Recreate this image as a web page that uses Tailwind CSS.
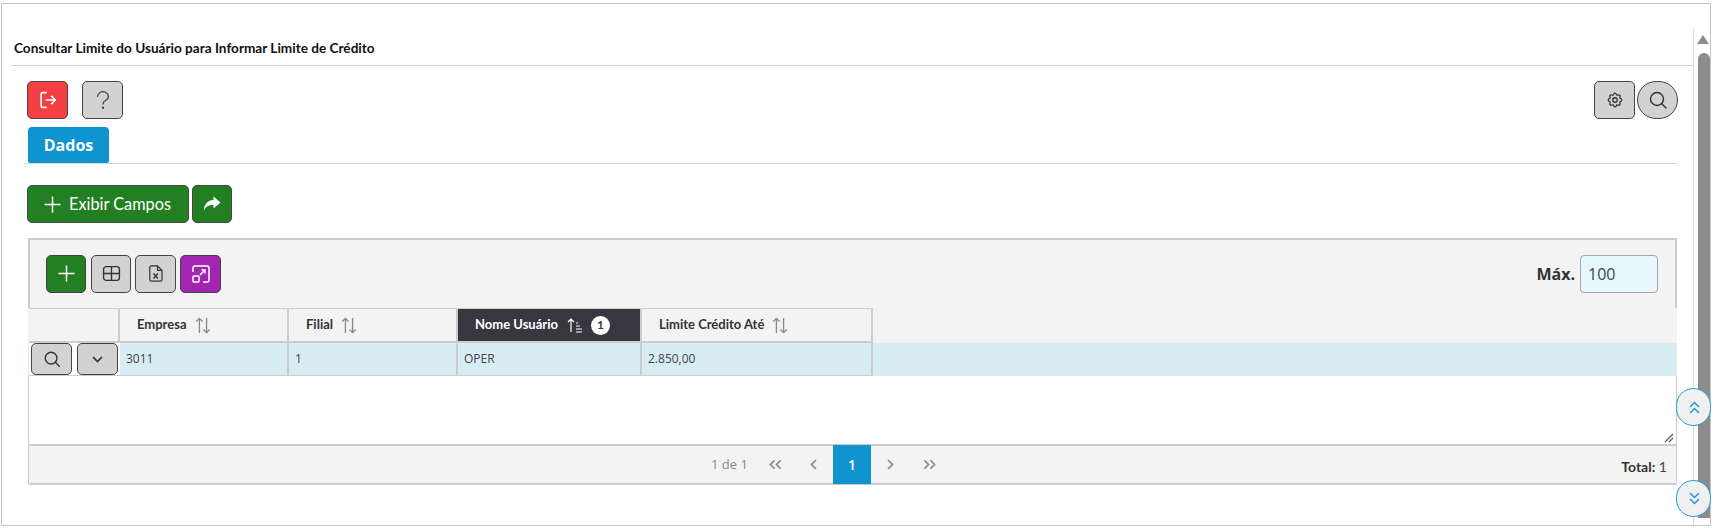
<!DOCTYPE html>
<html lang="pt-BR">
<head>
    <meta charset="UTF-8">
    <title>Consultar Limite do Usuário</title>
    <script src="https://cdn.jsdelivr.net/npm/@tailwindcss/browser@4"></script>
</head>
<body class="bg-white font-['Open_Sans',sans-serif] text-[#333]">
<div class="relative w-[1713px] h-[528px] overflow-hidden">
    <!-- moldura -->
    <div class="absolute left-[1px] top-[3px] w-[1710px] h-[523px] border border-[#c4c4c4]"></div>

    <div class="relative pt-[37px] pl-[11px] w-[1693px]">
        <h1 class="h-[29px] pl-[3px] text-[13.600px] leading-[22px] font-bold text-[#111] font-['Lato',sans-serif] border-b border-[#d0d0d0]">Consultar Limite do Usuário para Informar Limite de Crédito</h1>

        <div class="pl-[16px] pr-[15px] w-[1682px]">
            <!-- barra superior -->
            <div class="flex items-center mt-[15px] h-[38px]">
                <button class="w-[41px] h-[38px] rounded-[5px] border border-[#444] bg-[#f44043] flex items-center justify-center text-white">
                    <svg width="22" height="22" viewBox="0 0 24 24" fill="none" stroke="currentColor" stroke-width="1.800" stroke-linecap="round" stroke-linejoin="round"><path d="M10 4H6a1.500 1.500 0 0 0-1.500 1.500v13A1.500 1.500 0 0 0 6 20h4"/><path d="M10 12h10"/><path d="M16 8l4 4-4 4"/></svg>
                </button>
                <button class="ml-[14px] w-[41px] h-[38px] rounded-[5px] border border-[#444] bg-[#d2d2d2] flex items-center justify-center text-[#444]">
                    <svg width="20" height="22" viewBox="0 0 22 24" fill="none" stroke="currentColor" stroke-width="1.400" stroke-linecap="round"><path d="M5 8a6 5 0 1 1 9.500 4c-2.500 1.500-3.500 2.300-3.500 4.500"/><circle cx="11" cy="20.500" r="0.600" fill="currentColor"/></svg>
                </button>
                <div class="ml-auto flex items-center">
                    <button class="w-[41px] h-[38px] rounded-[5px] border border-[#444] bg-[#d2d2d2] flex items-center justify-center text-[#333]">
                        <svg width="18" height="18" viewBox="0 0 24 24" fill="none" stroke="currentColor" stroke-width="1.700" stroke-linecap="round" stroke-linejoin="round"><path d="M10.300 4.300c.4-1.800 3-1.800 3.400 0a1.700 1.700 0 0 0 2.600 1.100c1.500-.9 3.300.8 2.400 2.400a1.700 1.700 0 0 0 1 2.500c1.800.4 1.800 3 0 3.400a1.700 1.700 0 0 0-1 2.600c.9 1.500-.9 3.300-2.400 2.400a1.700 1.700 0 0 0-2.600 1c-.4 1.800-3 1.800-3.400 0a1.700 1.700 0 0 0-2.600-1c-1.500.9-3.300-.9-2.400-2.400a1.700 1.700 0 0 0-1-2.600c-1.800-.4-1.800-3 0-3.400a1.700 1.700 0 0 0 1-2.500c-.9-1.600.9-3.300 2.400-2.400a1.700 1.700 0 0 0 2.600-1.100z"/><circle cx="12" cy="12" r="3"/></svg>
                    </button>
                    <button class="ml-[2px] w-[41px] h-[38px] rounded-full border border-[#444] bg-[#d2d2d2] flex items-center justify-center text-[#333]">
                        <svg width="20" height="20" viewBox="0 0 20 20" fill="none" stroke="currentColor" stroke-width="1.400" stroke-linecap="round"><circle cx="9" cy="9" r="6.500"/><path d="M14 14l4 4"/></svg>
                    </button>
                </div>
            </div>

            <!-- abas -->
            <div class="mt-[8px] h-[37px] border-b border-[#d4d4d4] w-[1653px] -ml-[3px] pl-[4px]">
                <div class="w-[81px] h-[36px] rounded-t-[4px] rounded-b-[2px] bg-[#1094cf] text-white text-[16px] font-bold flex items-center justify-center">Dados</div>
            </div>

            <!-- acoes -->
            <div class="flex mt-[21px] gap-[3px]">
                <button class="w-[162px] h-[38px] rounded-[5px] border border-[#444] bg-[#228022] text-white flex items-center pl-[16px] gap-[8px] text-[16.300px] font-['Lato',sans-serif]">
                    <svg width="17" height="17" viewBox="0 0 17 17" stroke="currentColor" stroke-width="1.500"><path d="M8.500 0.500v16M0.500 8.500h16"/></svg>
                    Exibir Campos
                </button>
                <button class="w-[40px] h-[38px] rounded-[5px] border border-[#444] bg-[#228022] text-white flex items-center justify-center">
                    <svg width="18" height="16" viewBox="0 0 18 16" fill="currentColor"><path d="M10.500 0.500l7 6-7 6V9C6 9 3 10 1 14.500 1 8.500 4 4.500 10.500 4z"/></svg>
                </button>
            </div>

            <!-- tabela -->
            <div class="relative mt-[15px] ml-[1px] w-[1649px] h-[209px] border-x border-[#cccccc]">
                <div class="h-[70px] bg-[#f3f3f3] border-t-2 border-r-2 border-l-2 border-[#cccccc] flex items-center pl-[16px] pr-[17px] pb-[1px] -ml-[1px] w-[1649px]">
                    <button class="w-[40px] h-[38px] rounded-[5px] border border-[#444] bg-[#228022] text-white flex items-center justify-center">
                        <svg width="17" height="17" viewBox="0 0 17 17" stroke="currentColor" stroke-width="1.500"><path d="M8.500 0.500v16M0.500 8.500h16"/></svg>
                    </button>
                    <button class="ml-[5px] w-[40px] h-[38px] rounded-[5px] border border-[#444] bg-[#d2d2d2] flex items-center justify-center text-[#333]">
                        <svg width="19" height="17" viewBox="0 0 18 16" fill="none" stroke="currentColor" stroke-width="1.300"><rect x="1.500" y="1.500" width="15" height="13" rx="2.500"/><path d="M9 1.500v13M1.500 8h15"/></svg>
                    </button>
                    <button class="ml-[4px] w-[41px] h-[38px] rounded-[5px] border border-[#444] bg-[#d2d2d2] flex items-center justify-center text-[#333]">
                        <svg width="14" height="17" viewBox="0 0 14 17" fill="none" stroke="currentColor" stroke-width="1.200" stroke-linejoin="round"><path d="M2.500 0.800h6l4.500 4.500v9.200a1.700 1.700 0 0 1-1.700 1.700H2.500A1.700 1.700 0 0 1 0.800 14.500V2.500A1.700 1.700 0 0 1 2.500 0.800z"/><path d="M8.500 0.800v4.500H13"/><path d="M4.500 8.500l4.500 5M9 8.500l-4.500 5" stroke-width="1.400"/></svg>
                    </button>
                    <button class="ml-[4px] w-[41px] h-[38px] rounded-[5px] border border-[#444] bg-[#a025b0] flex items-center justify-center text-white">
                        <svg width="18" height="18" viewBox="0 0 18 18" fill="none" stroke="currentColor" stroke-width="1.500" stroke-linejoin="round"><path d="M1 7V3a2 2 0 0 1 2-2h12a2 2 0 0 1 2 2v12a2 2 0 0 1-2 2h-4"/><rect x="1" y="11" width="6" height="6" rx="1"/><path d="M8 10l5-5M9.500 5H13v3.500"/></svg>
                    </button>
                    <div class="ml-auto flex items-center">
                        <span class="text-[16px] font-bold text-[#333] mr-[5px]">Máx.</span>
                        <input value="100" class="w-[78px] h-[38px] rounded-[4px] border border-[#a6a6a6] bg-[#e5f6fd] pl-[7px] text-[16px] text-[#444] outline-none">
                    </div>
                </div>

                <!-- cabecalho -->
                <div class="flex h-[35px] bg-[#f3f3f3] -ml-[1px] w-[1649px] pl-[1px] text-[13px] font-bold text-[#333] font-['Lato',sans-serif]">
                    <div class="w-[91px] border-t border-r-2 border-b-2 border-[#cccccc]"></div>
                    <div class="w-[169px] flex items-center pl-[17px] gap-[8px] border-t border-r-2 border-b-2 border-[#cccccc]">Empresa
                        <svg width="16" height="17" viewBox="0 0 17 19" fill="none" stroke="#8a8a8a" stroke-width="1.500"><path d="M4.500 18V1.500M1 5l3.500-3.500L8 5M12.500 1v16.500M9 14l3.500 3.500L16 14"/></svg>
                    </div>
                    <div class="w-[169px] flex items-center pl-[17px] gap-[8px] border-t border-r-2 border-b-2 border-[#cccccc]">Filial
                        <svg width="16" height="17" viewBox="0 0 17 19" fill="none" stroke="#8a8a8a" stroke-width="1.500"><path d="M4.500 18V1.500M1 5l3.500-3.500L8 5M12.500 1v16.500M9 14l3.500 3.500L16 14"/></svg>
                    </div>
                    <div class="w-[184px] flex items-center pl-[17px] bg-[#37373d] text-white border-t border-r-2 border-b-2 border-[#cccccc]">Nome Usuário
                        <svg class="ml-[9px]" width="16" height="15" viewBox="0 0 16 15" fill="none" stroke="#ffffff" stroke-width="1.200"><path d="M4 14V1M1 4l3-3 3 3M9 5h2M9 8h4M9 11h6M9 14h6"/></svg>
                        <span class="ml-[8px] w-[19px] h-[19px] rounded-full bg-white text-[#37373d] text-[12px] flex items-center justify-center">1</span>
                    </div>
                    <div class="w-[231px] flex items-center pl-[17px] gap-[8px] border-t border-r-2 border-b-2 border-[#cccccc]">Limite Crédito Até
                        <svg width="16" height="17" viewBox="0 0 17 19" fill="none" stroke="#8a8a8a" stroke-width="1.500"><path d="M4.500 18V1.500M1 5l3.500-3.500L8 5M12.500 1v16.500M9 14l3.500 3.500L16 14"/></svg>
                    </div>
                </div>

                <!-- linha -->
                <div class="flex h-[33px] bg-[#d8edf3] -ml-[1px] w-[1649px] pl-[1px] text-[12px] text-[#444]">
                    <div class="w-[91px] flex items-center gap-[5px] pl-[2px] bg-white border-b border-[#cccccc]">
                        <button class="w-[41px] h-[32px] rounded-[5px] border border-[#444] bg-[#d2d2d2] flex items-center justify-center text-[#333]">
                            <svg width="18" height="18" viewBox="0 0 20 20" fill="none" stroke="currentColor" stroke-width="1.500" stroke-linecap="round"><circle cx="9" cy="9" r="6.500"/><path d="M14 14l4 4"/></svg>
                        </button>
                        <button class="w-[41px] h-[32px] rounded-[5px] border border-[#444] bg-[#d2d2d2] flex items-center justify-center text-[#333]">
                            <svg width="11" height="7" viewBox="0 0 11 7" fill="none" stroke="currentColor" stroke-width="1.700"><path d="M1 1l4.500 4.500L10 1"/></svg>
                        </button>
                    </div>
                    <div class="w-[169px] flex items-center pl-[6px] border-r-2 border-b border-[#cccccc]">3011</div>
                    <div class="w-[169px] flex items-center pl-[6px] border-r-2 border-b border-[#cccccc]">1</div>
                    <div class="w-[184px] flex items-center pl-[6px] border-r-2 border-b border-[#cccccc]">OPER</div>
                    <div class="w-[231px] flex items-center pl-[6px] border-r-2 border-b border-[#cccccc]">2.850,00</div>
                </div>

                <!-- alca de redimensionar -->
                <svg class="absolute right-[2px] bottom-[4px]" width="10" height="10" viewBox="0 0 10 10" stroke="#555" stroke-width="1.100"><path d="M1 9l8-8M5 9l4-4"/></svg>
            </div>

            <!-- paginacao -->
            <div class="relative ml-[1px] -mt-[3px] w-[1649px] h-[41px] rounded-[2px] bg-[#f3f3f3] border-x border-t-2 border-b-2 border-[#cccccc] text-[13px] text-[#888]">
                <div class="absolute left-[682px] top-[-1px] flex items-center h-[39px]">
                    <span class="w-[36px] text-center whitespace-nowrap">1 de 1</span>
                    <svg class="ml-[22px]" width="13" height="11" viewBox="0 0 14 11" fill="none" stroke="#888" stroke-width="1.700"><path d="M6 1L1.500 5.500 6 10M12.500 1L8 5.500l4.500 4.500"/></svg>
                    <svg class="ml-[28px]" width="7" height="11" viewBox="0 0 7 11" fill="none" stroke="#888" stroke-width="1.700"><path d="M6 1L1.500 5.500 6 10"/></svg>
                    <span class="ml-[16px] w-[38px] h-[39px] bg-[#1094cf] text-white text-[14px] font-semibold flex items-center justify-center">1</span>
                    <svg class="ml-[16px]" width="7" height="11" viewBox="0 0 7 11" fill="none" stroke="#888" stroke-width="1.700"><path d="M1 1l4.500 4.500L1 10"/></svg>
                    <svg class="ml-[29px]" width="13" height="11" viewBox="0 0 14 11" fill="none" stroke="#888" stroke-width="1.700"><path d="M1.500 1L6 5.500 1.500 10M8 1l4.500 4.500L8 10"/></svg>
                </div>
                <span class="absolute right-[9px] top-[10px] text-[14px] text-[#444] font-['Lato',sans-serif]"><b class="text-[#333]">Total:</b> 1</span>
            </div>
        </div>
    </div>

    <!-- barra de rolagem -->
    <div class="absolute left-[1693px] top-[28px] w-[17px] h-[497px] border-l border-[#d8d8d8] bg-white">
        <div class="mt-[7px] ml-[3px] w-0 h-0 border-x-[6.500px] border-x-transparent border-b-[9px] border-b-[#8c8c8c]"></div>
        <div class="ml-[4px] mt-[9px] w-[12px] h-[465px] rounded-t-[6px] bg-[#8c8c8c]"></div>
    </div>

    <!-- botoes flutuantes -->
    <button class="absolute left-[1676px] top-[388px] w-[35px] h-[38px] rounded-full border border-[#1f9bd3] bg-[#f0f0f0] flex items-center justify-center pl-[2px]">
        <svg width="11" height="13" viewBox="0 0 11 13" fill="none" stroke="#1f9bd3" stroke-width="1.500"><path d="M1 6l4.500-4.500L10 6M1 12l4.500-4.500L10 12"/></svg>
    </button>
    <button class="absolute left-[1676px] top-[480px] w-[35px] h-[37px] rounded-full border border-[#1f9bd3] bg-[#f0f0f0] flex items-center justify-center pl-[2px]">
        <svg width="11" height="13" viewBox="0 0 11 13" fill="none" stroke="#1f9bd3" stroke-width="1.500"><path d="M1 1l4.500 4.500L10 1M1 7l4.500 4.500L10 7"/></svg>
    </button>
</div>
</body>
</html>
